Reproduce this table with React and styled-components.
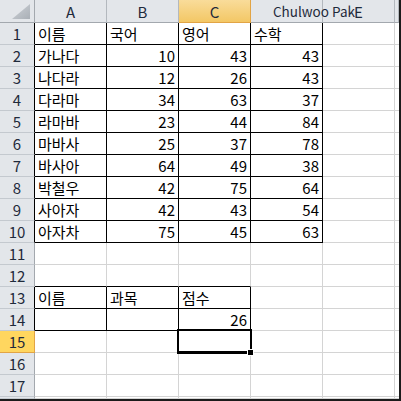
import React from 'react';
import styled, { createGlobalStyle } from 'styled-components';

const GlobalStyle = createGlobalStyle`
  html, body {
    margin: 0;
    padding: 0;
    background: #ffffff;
  }
`;

const COLS = ['A', 'B', 'C', 'D', 'E', 'F'];
const ROW_COUNT = 18;

// cell values, keyed by "row:col"
const data = {
  '1:A': '이름', '1:B': '국어', '1:C': '영어', '1:D': '수학',
  '2:A': '가나다', '2:B': 10, '2:C': 43, '2:D': 43,
  '3:A': '나다라', '3:B': 12, '3:C': 26, '3:D': 43,
  '4:A': '다라마', '4:B': 34, '4:C': 63, '4:D': 37,
  '5:A': '라마바', '5:B': 23, '5:C': 44, '5:D': 84,
  '6:A': '마바사', '6:B': 25, '6:C': 37, '6:D': 78,
  '7:A': '바사아', '7:B': 64, '7:C': 49, '7:D': 38,
  '8:A': '박철우', '8:B': 42, '8:C': 75, '8:D': 64,
  '9:A': '사아자', '9:B': 42, '9:C': 43, '9:D': 54,
  '10:A': '아자차', '10:B': 75, '10:C': 45, '10:D': 63,
  '13:A': '이름', '13:B': '과목', '13:C': '점수',
  '14:C': 26,
};

const inBox = (r, c) => {
  const ci = COLS.indexOf(c);
  if (r >= 1 && r <= 10 && ci >= 0 && ci <= 3) return true;
  if (r >= 13 && r <= 14 && ci >= 0 && ci <= 2) return true;
  return false;
};

const SELECTED = { row: 15, col: 'C' };

const Sheet = styled.div`
  width: 401px;
  height: 401px;
  box-sizing: border-box;
  border-right: 2px solid #1b1b1b;
  border-bottom: 2px solid #1b1b1b;
  display: grid;
  grid-template-columns: 35px repeat(5, 72px) 4px;
  grid-template-rows: 23px repeat(17, 22px) 2px;
  overflow: hidden;
  font-family: 'Noto Sans CJK KR', 'Noto Sans', sans-serif;
  font-size: 15px;
  color: #000;
`;

const Corner = styled.div`
  box-sizing: border-box;
  background: #e3e6ea;
  border-right: 1px solid #a3a8ae;
  border-bottom: 1px solid #a3a8ae;
  display: flex;
  align-items: flex-end;
  justify-content: flex-end;
  padding: 0 4px 3px 0;
`;

const ColHead = styled.div`
  box-sizing: border-box;
  position: relative;
  z-index: ${(p) => (p.$over ? 2 : 0)};
  background: ${(p) =>
    p.$active ? 'linear-gradient(#f9dc9a, #f3c765)' : '#e3e6ea'};
  border-right: 1px solid ${(p) => (p.$active ? '#e2a445' : '#b3b8be')};
  border-bottom: 1px solid ${(p) => (p.$active ? '#e2a445' : '#a3a8ae')};
  display: flex;
  align-items: center;
  justify-content: ${(p) => (p.$over ? 'flex-start' : 'center')};
  padding-left: ${(p) => (p.$over ? '22px' : '0')};
  white-space: nowrap;
  line-height: 21px;
  color: #1f2a3b;
  font-size: ${(p) => (p.$over ? '13.5px' : '15px')};
`;

const RowHead = styled.div`
  box-sizing: border-box;
  background: ${(p) => (p.$active ? '#ffd65f' : '#e3e6ea')};
  border-right: 1px solid ${(p) =>
    p.$boxed ? '#000' : p.$active ? '#e2a445' : '#a3a8ae'};
  border-bottom: 1px solid ${(p) => (p.$active ? '#e2a445' : '#c4c9cf')};
  display: flex;
  align-items: center;
  justify-content: center;
  line-height: 21px;
  color: #1f2a3b;
`;

const Cell = styled.div`
  box-sizing: border-box;
  position: relative;
  background: #fff;
  border-right: 1px solid ${(p) => (p.$blackRight ? '#000' : '#d4d4d4')};
  border-bottom: 1px solid ${(p) => (p.$blackBottom ? '#000' : '#d4d4d4')};
  padding: 0 3px 0 3px;
  text-align: ${(p) => (p.$num ? 'right' : 'left')};
  line-height: 21px;
  white-space: nowrap;
  overflow: visible;
`;

const Selection = styled.div`
  position: absolute;
  top: -2px;
  left: -2px;
  right: -2px;
  bottom: -2px;
  border: 2px solid #000;
  border-bottom-width: 3px;
  pointer-events: none;
  z-index: 3;
`;

const FillHandle = styled.div`
  position: absolute;
  right: -4px;
  bottom: -5px;
  width: 5px;
  height: 5px;
  background: #000;
  border: 1px solid #fff;
  z-index: 4;
`;

const CornerMark = () => (
  <svg width="18" height="15" viewBox="0 0 18 15">
    <defs>
      <linearGradient id="cm" x1="0" y1="0" x2="1" y2="1">
        <stop offset="0" stopColor="#cfd3d8" />
        <stop offset="1" stopColor="#a9afb6" />
      </linearGradient>
    </defs>
    <polygon points="0,15 18,15 18,0" fill="url(#cm)" />
  </svg>
);

const App = () => {
  const cells = [];

  cells.push(
    <Corner key="corner">
      <CornerMark />
    </Corner>
  );

  COLS.forEach((c) => {
    if (c === 'D') {
      cells.push(
        <ColHead key={`h-${c}`} $over>
          Chulwoo Pak
        </ColHead>
      );
    } else {
      cells.push(
        <ColHead key={`h-${c}`} $active={c === SELECTED.col}>
          {c === 'F' ? '' : c}
        </ColHead>
      );
    }
  });

  for (let r = 1; r <= ROW_COUNT; r++) {
    cells.push(
      <RowHead key={`r-${r}`} $active={r === SELECTED.row} $boxed={inBox(r, 'A')}>
        {r <= 17 ? r : ''}
      </RowHead>
    );
    COLS.forEach((c, i) => {
      const value = data[`${r}:${c}`];
      const isSel = r === SELECTED.row && c === SELECTED.col;
      cells.push(
        <Cell
          key={`${r}:${c}`}
          $num={typeof value === 'number'}
          $blackRight={inBox(r, c) || inBox(r, COLS[i + 1])}
          $blackBottom={inBox(r, c) || inBox(r + 1, c)}
        >
          {value}
          {isSel && (
            <Selection>
              <FillHandle />
            </Selection>
          )}
        </Cell>
      );
    });
  }

  return (
    <>
      <GlobalStyle />
      <Sheet>{cells}</Sheet>
    </>
  );
};

export default App;
